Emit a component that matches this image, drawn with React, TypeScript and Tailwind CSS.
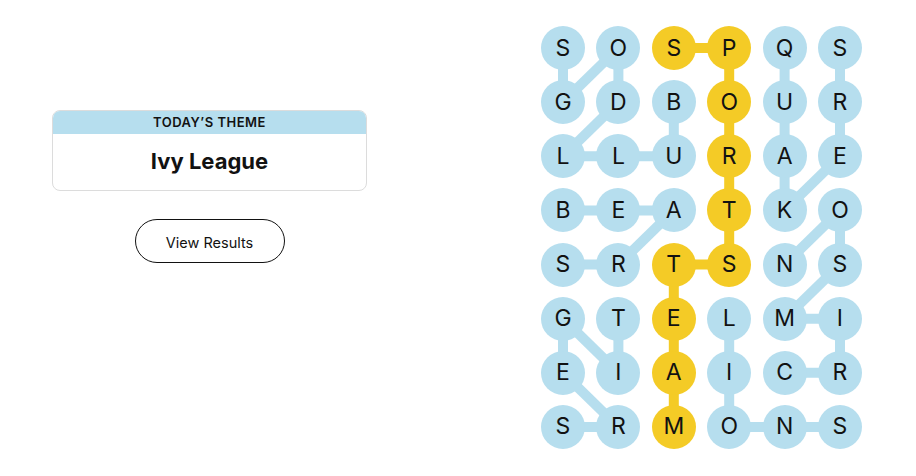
const BOARD = [
  "SOSPQS",
  "GDBOUR",
  "LLURAE",
  "BEATKO",
  "SRTSNS",
  "GTELMI",
  "EIAICR",
  "SRMONS",
];

type Word = { cells: [number, number][]; spangram?: boolean };

const WORDS: Word[] = [
  { cells: [[1, 2], [2, 2], [2, 1], [2, 0], [1, 1], [0, 1], [1, 0], [0, 0]] },
  { cells: [[0, 4], [1, 4], [2, 4], [3, 4], [2, 5], [1, 5], [0, 5]] },
  { cells: [[3, 0], [3, 1], [3, 2], [4, 1], [4, 0]] },
  {
    cells: [[0, 2], [0, 3], [1, 3], [2, 3], [3, 3], [4, 3], [4, 2], [5, 2], [6, 2], [7, 2]],
    spangram: true,
  },
  { cells: [[6, 4], [6, 5], [5, 5], [5, 4], [4, 5], [3, 5], [4, 4]] },
  { cells: [[5, 1], [6, 1], [5, 0], [6, 0], [7, 1], [7, 0]] },
  { cells: [[5, 3], [6, 3], [7, 3], [7, 4], [7, 5]] },
];

const BLUE = "#b6deee";
const YELLOW = "#f4cb26";

const CELL = 44;
const STEP_X = 55.4;
const STEP_Y = 54.14;

const isSpangram = (r: number, c: number) =>
  WORDS.some((w) => w.spangram && w.cells.some(([wr, wc]) => wr === r && wc === c));

const center = (r: number, c: number) => ({
  x: CELL / 2 + c * STEP_X,
  y: CELL / 2 + r * STEP_Y,
});

const Connectors = () => (
  <svg className="absolute inset-0 w-full h-full" aria-hidden>
    {WORDS.map((word, i) =>
      word.cells.slice(1).map(([r, c], j) => {
        const [pr, pc] = word.cells[j];
        const a = center(pr, pc);
        const b = center(r, c);
        return (
          <line
            key={`${i}-${j}`}
            x1={a.x}
            y1={a.y}
            x2={b.x}
            y2={b.y}
            stroke={word.spangram ? YELLOW : BLUE}
            strokeWidth={10}
          />
        );
      })
    )}
  </svg>
);

const Board = () => (
  <div className="relative mt-[26px] ml-[174px]">
    <Connectors />
    <div className="relative grid grid-cols-[repeat(6,44px)] gap-x-[11.4px] gap-y-[10.14px]">
      {BOARD.map((row, r) =>
        row.split("").map((letter, c) => (
          <button
            key={`${r}-${c}`}
            type="button"
            className={`w-[44px] h-[44px] rounded-full flex items-center justify-center text-[23px] leading-none text-[#121212] ${
              isSpangram(r, c) ? "bg-[#f4cb26]" : "bg-[#b6deee]"
            }`}
          >
            {letter}
          </button>
        ))
      )}
    </div>
  </div>
);

export default function App() {
  return (
    <div className="w-[916px] h-[476px] bg-white flex font-['Inter','Liberation_Sans',sans-serif] text-[#121212]">
      <div className="pl-[52px] pt-[110px] w-[367px] flex flex-col items-center shrink-0">
        <div className="w-[315px] h-[81px] rounded-[8px] border border-[#dcdcdc] overflow-hidden flex flex-col">
          <div className="h-[23px] bg-[#b6deee] flex items-center justify-center pt-[1px] text-[13px] font-semibold tracking-[0.5px] uppercase">
            Today’s Theme
          </div>
          <div className="flex-1 flex items-center justify-center pb-[2px] text-[22px] font-bold">
            Ivy League
          </div>
        </div>
        <button
          type="button"
          className="mt-[28px] w-[150px] h-[44px] rounded-full border border-[#121212] pt-[3px] text-[14.5px] bg-white"
        >
          View Results
        </button>
      </div>
      <Board />
    </div>
  );
}
